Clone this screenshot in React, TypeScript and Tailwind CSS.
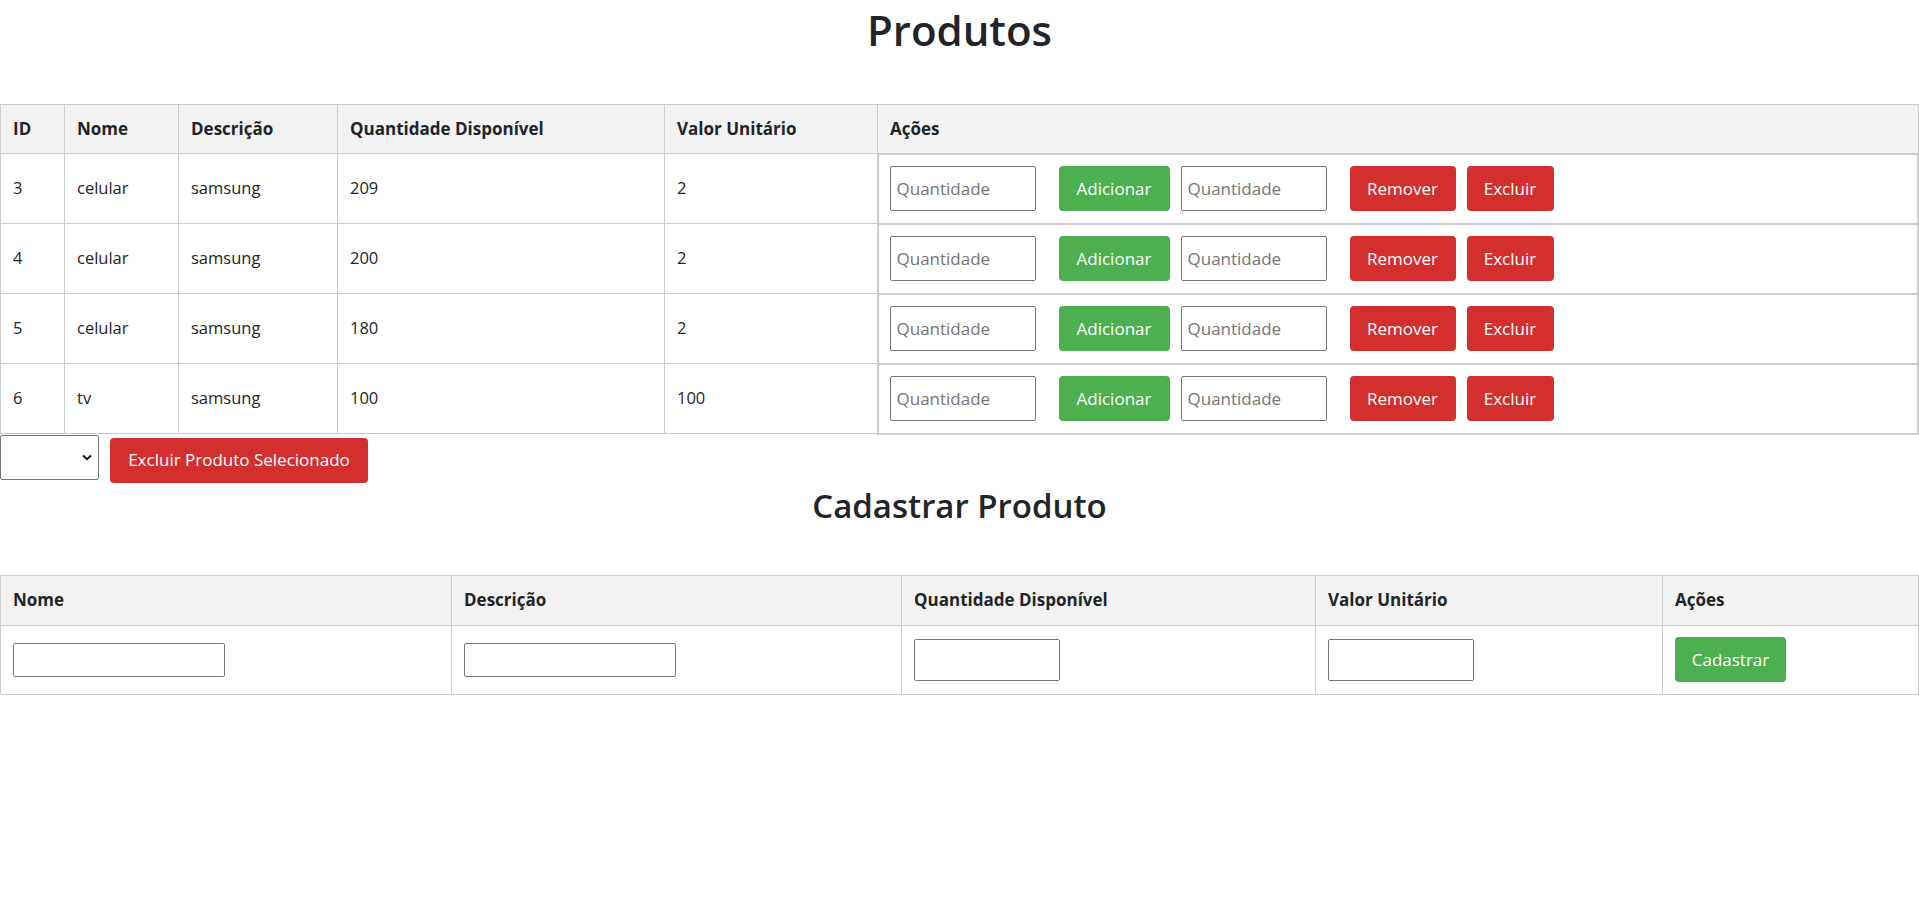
import React from "react";

const rows = [
  { id: 3, nome: "celular", desc: "samsung", qtd: "209", valor: "2" },
  { id: 4, nome: "celular", desc: "samsung", qtd: "200", valor: "2" },
  { id: 5, nome: "celular", desc: "samsung", qtd: "180", valor: "2" },
  { id: 6, nome: "tv", desc: "samsung", qtd: "100", valor: "100" },
];

const th =
  "h-[49px] border border-[#cccccc] px-3 text-left align-middle text-[17px] font-bold";
const th2 =
  "h-[50px] border border-[#cccccc] px-3 text-left align-middle text-[17px] font-bold";
const td = "h-[70px] border border-[#cccccc] px-3 text-left align-middle";
const td2 = "h-[69px] border border-[#cccccc] px-3 text-left align-middle";

export default function App() {
  return (
    <div className="min-h-screen bg-white font-['Open_Sans',sans-serif] text-[16.5px] text-[#212529]">
      <h1 className="pt-[4px] text-center text-[42px] font-semibold leading-[52px]">Produtos</h1>

      <table className="mt-[48px] w-full border-collapse">
        <thead>
          <tr className="bg-[#f2f2f2]">
            <th className={`${th} w-[64px]`}>ID</th>
            <th className={`${th} w-[114px]`}>Nome</th>
            <th className={`${th} w-[159px]`}>Descrição</th>
            <th className={`${th} w-[327px]`}>Quantidade Disponível</th>
            <th className={`${th} w-[213px]`}>Valor Unitário</th>
            <th className={th}>Ações</th>
          </tr>
        </thead>
        <tbody>
          {rows.map((r) => (
            <tr key={r.id}>
              <td className={td}>{r.id}</td>
              <td className={td}>{r.nome}</td>
              <td className={td}>{r.desc}</td>
              <td className={td}>{r.qtd}</td>
              <td className={td}>{r.valor}</td>
              <td className="h-[70px] border-2 border-[#cccccc] px-[11px] align-middle">
                <div className="flex items-center">
                  <input
                    type="number"
                    placeholder="Quantidade"
                    className="h-[45px] w-[146px] rounded-[2px] border border-[#767676] px-[6px] text-[17px] outline-none placeholder:text-[#757575]"
                  />
                  <button className="ml-[23px] h-[45px] w-[111px] rounded-[4px] bg-[#4caf50] text-[17px] text-white">
                    Adicionar
                  </button>
                  <input
                    type="number"
                    placeholder="Quantidade"
                    className="ml-[11px] h-[45px] w-[146px] rounded-[2px] border border-[#767676] px-[6px] text-[17px] outline-none placeholder:text-[#757575]"
                  />
                  <button className="ml-[23px] h-[45px] w-[106px] rounded-[4px] bg-[#d32f2f] text-[17px] text-white">
                    Remover
                  </button>
                  <button className="ml-[11px] h-[45px] w-[87px] rounded-[4px] bg-[#d32f2f] text-[17px] text-white">
                    Excluir
                  </button>
                </div>
              </td>
            </tr>
          ))}
        </tbody>
      </table>

      <div className="flex items-start">
        <div className="relative h-[45px] w-[99px]">
          <select className="h-full w-full appearance-none rounded-[2px] border border-[#767676] bg-white outline-none"></select>
          <svg
            className="pointer-events-none absolute left-[82px] top-[19px]"
            width="10"
            height="7"
            viewBox="0 0 10 7"
          >
            <path d="M1 1.5 L5 5.2 L9 1.5" fill="none" stroke="#111" strokeWidth="2" />
          </svg>
        </div>
        <button className="ml-[11px] mt-[3px] h-[45px] w-[258px] rounded-[4px] bg-[#d32f2f] text-[17px] text-white">
          Excluir Produto Selecionado
        </button>
      </div>

      <h2 className="mt-[2px] text-center text-[33px] font-semibold leading-[41px]">Cadastrar Produto</h2>

      <table className="mt-[49px] w-full border-collapse">
        <thead>
          <tr className="bg-[#f2f2f2]">
            <th className={`${th2} w-[451px]`}>Nome</th>
            <th className={`${th2} w-[450px]`}>Descrição</th>
            <th className={`${th2} w-[414px]`}>Quantidade Disponível</th>
            <th className={`${th2} w-[347px]`}>Valor Unitário</th>
            <th className={th2}>Ações</th>
          </tr>
        </thead>
        <tbody>
          <tr>
            <td className={td2}>
              <input type="text" className="block h-[34px] w-[212px] rounded-[2px] border border-[#767676] px-1 outline-none" />
            </td>
            <td className={td2}>
              <input type="text" className="block h-[34px] w-[212px] rounded-[2px] border border-[#767676] px-1 outline-none" />
            </td>
            <td className={td2}>
              <input type="number" className="block h-[42px] w-[146px] rounded-[2px] border border-[#767676] px-1 outline-none" />
            </td>
            <td className={td2}>
              <input type="number" className="block h-[42px] w-[146px] rounded-[2px] border border-[#767676] px-1 outline-none" />
            </td>
            <td className={td2}>
              <button className="h-[45px] w-[111px] rounded-[4px] bg-[#4caf50] text-[17px] text-white">Cadastrar</button>
            </td>
          </tr>
        </tbody>
      </table>
    </div>
  );
}
